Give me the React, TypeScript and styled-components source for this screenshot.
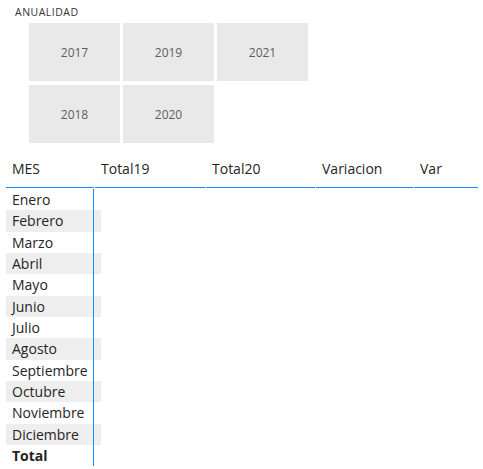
import styled, { createGlobalStyle } from 'styled-components';

const GlobalStyle = createGlobalStyle`
  html, body {
    margin: 0;
    padding: 0;
    background: #ffffff;
  }
  body {
    font-family: "Segoe UI", "Open Sans", "Liberation Sans", sans-serif;
    color: #252423;
  }
`;

const Page = styled.div`
  width: 483px;
  height: 469px;
  overflow: hidden;
  display: flex;
  flex-direction: column;
`;

const Slicer = styled.div`
  padding: 5px 0 0 15px;
  height: 151px;
  box-sizing: border-box;
`;

const SlicerTitle = styled.div`
  font-size: 10.5px;
  line-height: 14px;
  letter-spacing: 0.5px;
  color: #333333;
`;

const TileGrid = styled.div`
  margin: 4px 0 0 14px;
  display: grid;
  grid-template-columns: repeat(3, 91px);
  grid-auto-rows: 58px;
  column-gap: 3px;
  row-gap: 4px;
`;

const Tile = styled.div`
  background: #e9e9e9;
  display: flex;
  align-items: center;
  justify-content: center;
  font-size: 12px;
  color: #605e5c;
`;

const Table = styled.div`
  padding-left: 6px;
`;

const HeaderRow = styled.div`
  display: grid;
  grid-template-columns: 88px 110px 109px 97px 64px;
  column-gap: 1px;
`;

const HeaderCell = styled.div`
  height: 37px;
  padding: 8px 0 0 6px;
  box-sizing: border-box;
  font-size: 14px;
  line-height: 20px;
  border-bottom: 1px solid #118dff;
`;

const Body = styled.div`
  display: flex;
  flex-direction: column;
  padding-top: 1px;
`;

const Row = styled.div<{ $striped: boolean; $h: number }>`
  width: 95px;
  height: ${p => p.$h}px;
  background: ${p => (p.$striped ? '#eeeeee' : 'transparent')};
  display: flex;
`;

const RowLabel = styled.div<{ $bold?: boolean }>`
  width: 88px;
  box-sizing: border-box;
  padding: 1px 0 0 6px;
  border-right: 1px solid #118dff;
  font-size: 14px;
  line-height: 20px;
  font-weight: ${p => (p.$bold ? 700 : 400)};
  white-space: nowrap;
`;

const years = ['2017', '2019', '2021', '2018', '2020'];
const headers = ['MES', 'Total19', 'Total20', 'Variacion', 'Var'];
const months = [
  'Enero', 'Febrero', 'Marzo', 'Abril', 'Mayo', 'Junio',
  'Julio', 'Agosto', 'Septiembre', 'Octubre', 'Noviembre', 'Diciembre',
];

const ROW = 64 / 3;
const rowHeight = (i: number) => Math.round((i + 1) * ROW) - Math.round(i * ROW);

const App = () => {
  return (
    <Page>
      <GlobalStyle />
      <Slicer>
        <SlicerTitle>ANUALIDAD</SlicerTitle>
        <TileGrid>
          {years.map(y => (
            <Tile key={y}>{y}</Tile>
          ))}
        </TileGrid>
      </Slicer>
      <Table>
        <HeaderRow>
          {headers.map(h => (
            <HeaderCell key={h}>{h}</HeaderCell>
          ))}
        </HeaderRow>
        <Body>
          {months.map((m, i) => (
            <Row key={m} $striped={i % 2 === 1} $h={rowHeight(i)}>
              <RowLabel>{m}</RowLabel>
            </Row>
          ))}
          <Row $striped={false} $h={rowHeight(12)}>
            <RowLabel $bold>Total</RowLabel>
          </Row>
        </Body>
      </Table>
    </Page>
  );
};

export default App;
